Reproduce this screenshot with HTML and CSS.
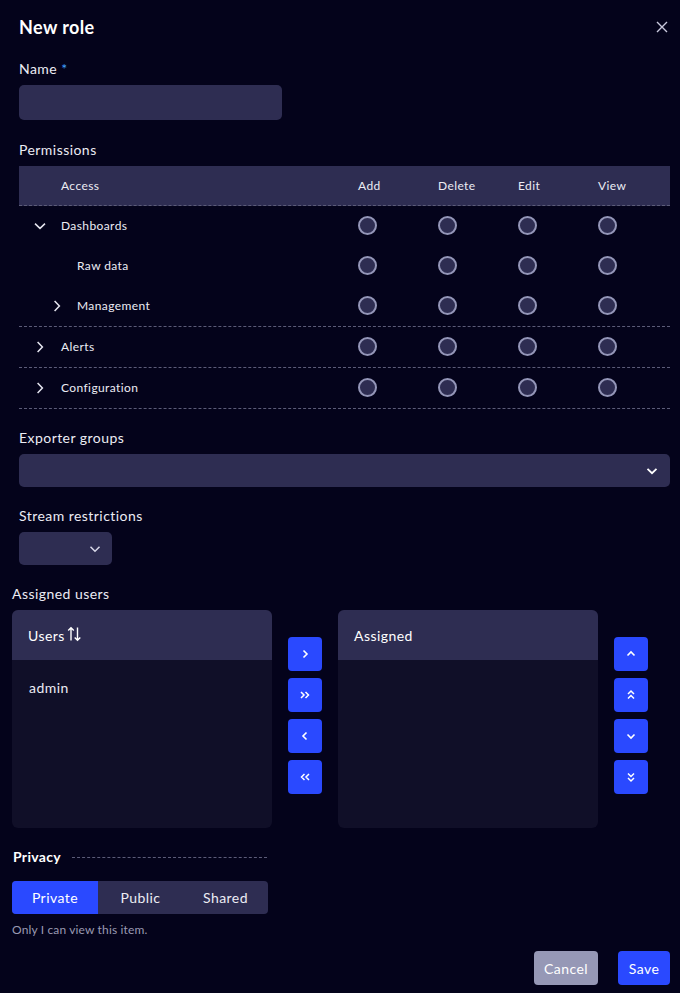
FILE: index.html
```html
<!DOCTYPE html>
<html lang="en">
<head>
<meta charset="utf-8">
<title>New role</title>
<link rel="stylesheet" href="styles.css">
</head>
<body>
<div class="page">
  <div class="form-top">
    <div class="dialog-head">
      <h1 class="title">New role</h1>
      <button class="close" aria-label="Close">
        <svg width="12" height="12" viewBox="0 0 12 12"><path d="M1 1L11 11M11 1L1 11" stroke="#c9c9dd" stroke-width="1.4" fill="none"/></svg>
      </button>
    </div>

    <label class="label">Name <span class="req">*</span></label>
    <div class="input name-input"></div>

    <label class="label mt">Permissions</label>
    <div class="perm-table">
      <div class="prow phead">
        <div class="pcell access">Access</div>
        <div class="pcell">Add</div>
        <div class="pcell">Delete</div>
        <div class="pcell">Edit</div>
        <div class="pcell">View</div>
      </div>
      <div class="pgroup">
        <div class="prow">
          <div class="pcell access"><span class="chev"><svg width="12" height="12" viewBox="0 0 12 12"><path d="M1 3.6L6 8.4L11 3.6" stroke="#e6e6f0" stroke-width="1.5" fill="none"/></svg></span>Dashboards</div>
          <div class="pcell"><span class="radio"></span></div><div class="pcell"><span class="radio"></span></div><div class="pcell"><span class="radio"></span></div><div class="pcell"><span class="radio"></span></div>
        </div>
        <div class="prow">
          <div class="pcell access sub">Raw data</div>
          <div class="pcell"><span class="radio"></span></div><div class="pcell"><span class="radio"></span></div><div class="pcell"><span class="radio"></span></div><div class="pcell"><span class="radio"></span></div>
        </div>
        <div class="prow">
          <div class="pcell access sub"><span class="chev sub-chev"><svg width="12" height="12" viewBox="0 0 12 12"><path d="M3.6 1L8.4 6L3.6 11" stroke="#e6e6f0" stroke-width="1.5" fill="none"/></svg></span>Management</div>
          <div class="pcell"><span class="radio"></span></div><div class="pcell"><span class="radio"></span></div><div class="pcell"><span class="radio"></span></div><div class="pcell"><span class="radio"></span></div>
        </div>
      </div>
      <div class="pgroup">
        <div class="prow">
          <div class="pcell access"><span class="chev"><svg width="12" height="12" viewBox="0 0 12 12"><path d="M3.6 1L8.4 6L3.6 11" stroke="#e6e6f0" stroke-width="1.5" fill="none"/></svg></span>Alerts</div>
          <div class="pcell"><span class="radio"></span></div><div class="pcell"><span class="radio"></span></div><div class="pcell"><span class="radio"></span></div><div class="pcell"><span class="radio"></span></div>
        </div>
      </div>
      <div class="pgroup">
        <div class="prow">
          <div class="pcell access"><span class="chev"><svg width="12" height="12" viewBox="0 0 12 12"><path d="M3.6 1L8.4 6L3.6 11" stroke="#e6e6f0" stroke-width="1.5" fill="none"/></svg></span>Configuration</div>
          <div class="pcell"><span class="radio"></span></div><div class="pcell"><span class="radio"></span></div><div class="pcell"><span class="radio"></span></div><div class="pcell"><span class="radio"></span></div>
        </div>
      </div>
    </div>

    <label class="label mt">Exporter groups</label>
    <div class="input select wide">
      <svg width="12" height="12" viewBox="0 0 12 12"><path d="M1.5 3.8L6 8.2L10.5 3.8" stroke="#ffffff" stroke-width="1.8" fill="none"/></svg>
    </div>

    <label class="label mt">Stream restrictions</label>
    <div class="input select small">
      <svg width="12" height="12" viewBox="0 0 12 12"><path d="M1.5 3.8L6 8.2L10.5 3.8" stroke="#d8d8e8" stroke-width="1.5" fill="none"/></svg>
    </div>
  </div>

  <label class="label mt">Assigned users</label>
  <div class="picklist">
    <div class="list">
      <div class="list-head">Users
        <svg class="sort" width="15" height="16" viewBox="0 0 15 16"><path d="M4 14.5V1.8M1.2 4.6L4 1.8L6.8 4.6" stroke="#ffffff" stroke-width="1.4" fill="none"/><path d="M10.5 1.5V14.2M7.7 11.4L10.5 14.2L13.3 11.4" stroke="#ffffff" stroke-width="1.4" fill="none"/></svg>
      </div>
      <div class="list-body"><div class="item">admin</div></div>
    </div>
    <div class="btn-col">
      <button class="ibtn"><svg width="12" height="12" viewBox="0 0 12 12"><path d="M4.5 2.5L8 6L4.5 9.5" stroke="#fff" stroke-width="1.6" fill="none"/></svg></button>
      <button class="ibtn"><svg width="12" height="12" viewBox="0 0 12 12"><path d="M2 3L5 6L2 9M6.5 3L9.5 6L6.5 9" stroke="#fff" stroke-width="1.5" fill="none"/></svg></button>
      <button class="ibtn"><svg width="12" height="12" viewBox="0 0 12 12"><path d="M7.5 2.5L4 6L7.5 9.5" stroke="#fff" stroke-width="1.6" fill="none"/></svg></button>
      <button class="ibtn"><svg width="12" height="12" viewBox="0 0 12 12"><path d="M5.5 3L2.5 6L5.5 9M10 3L7 6L10 9" stroke="#fff" stroke-width="1.5" fill="none"/></svg></button>
    </div>
    <div class="list">
      <div class="list-head">Assigned</div>
      <div class="list-body"></div>
    </div>
    <div class="btn-col">
      <button class="ibtn"><svg width="12" height="12" viewBox="0 0 12 12"><path d="M2.5 7.5L6 4L9.5 7.5" stroke="#fff" stroke-width="1.6" fill="none"/></svg></button>
      <button class="ibtn"><svg width="12" height="12" viewBox="0 0 12 12"><path d="M3 5L6 2L9 5M3 9.5L6 6.5L9 9.5" stroke="#fff" stroke-width="1.5" fill="none"/></svg></button>
      <button class="ibtn"><svg width="12" height="12" viewBox="0 0 12 12"><path d="M2.5 4.5L6 8L9.5 4.5" stroke="#fff" stroke-width="1.6" fill="none"/></svg></button>
      <button class="ibtn"><svg width="12" height="12" viewBox="0 0 12 12"><path d="M3 2.5L6 5.5L9 2.5M3 7L6 10L9 7" stroke="#fff" stroke-width="1.5" fill="none"/></svg></button>
    </div>
  </div>

  <div class="privacy-head">
    <span class="privacy-title">Privacy</span>
    <span class="privacy-line"></span>
  </div>
  <div class="segmented">
    <button class="seg active">Private</button>
    <button class="seg">Public</button>
    <button class="seg">Shared</button>
  </div>
  <div class="hint">Only I can view this item.</div>

  <div class="actions">
    <button class="btn cancel">Cancel</button>
    <button class="btn save">Save</button>
  </div>
</div>
</body>
</html>
```

FILE: styles.css
```css
* { box-sizing: border-box; }
html, body {
  margin: 0;
  padding: 0;
  background: #04031b;
}
body {
  font-family: Lato, "Noto Sans", sans-serif;
  color: #ececf4;
  font-size: 14px;
  letter-spacing: 0.45px;
}
button {
  font-family: inherit;
  letter-spacing: inherit;
  border: none;
  cursor: pointer;
}
.page {
  width: 680px;
  height: 993px;
  padding: 0 10px 0 12px;
  display: flex;
  flex-direction: column;
}
.form-top {
  padding-left: 7px;
  display: flex;
  flex-direction: column;
}
.dialog-head {
  display: flex;
  justify-content: space-between;
  align-items: center;
  padding-top: 15px;
  height: 39px;
}
.title {
  margin: 0;
  font-size: 18px;
  font-weight: 700;
  line-height: 24px;
  letter-spacing: 0.4px;
  color: #ffffff;
}
.close {
  background: none;
  padding: 0;
  width: 12px;
  height: 12px;
  margin-right: 2px;
  display: flex;
}
.label {
  display: block;
  line-height: 20px;
  font-size: 14px;
  color: #ececf4;
  margin-top: 20px;
  margin-bottom: 6px;
}
.label.mt { margin-top: 19px; }
.req { color: #3fa0ff; }
.input {
  background: #2e2d52;
  border-radius: 5px;
}
.name-input {
  width: 263px;
  height: 35px;
}
.label.mt:nth-of-type(2) { margin-top: 20px; }

.perm-table {
  width: 651px;
  font-size: 12px;
  letter-spacing: 0.4px;
}
.prow {
  display: flex;
  height: 40px;
  align-items: center;
}
.pgroup .prow { height: 40px; padding-bottom: 1px; }
.phead {
  background: #2e2d52;
  height: 40px;
  border-bottom: 1px dashed #5c5c78;
}
.pgroup {
  border-bottom: 1px dashed #5c5c78;
}
.pcell {
  width: 80px;
  padding-left: 8px;
  display: flex;
  align-items: center;
}
.pcell.access {
  width: 331px;
  padding-left: 42px;
  position: relative;
}
.pcell.sub { padding-left: 58px; }
.chev {
  position: absolute;
  left: 15px;
  top: 50%;
  margin-top: -6px;
  width: 12px;
  height: 12px;
  display: flex;
}
.chev.sub-chev { left: 32px; }
.radio {
  width: 19px;
  height: 19px;
  border-radius: 50%;
  background: #2e2d52;
  border: 2px solid #9496b8;
  display: block;
}

.select {
  height: 33px;
  display: flex;
  align-items: center;
  justify-content: flex-end;
}
.select.wide {
  width: 651px;
  padding-right: 12px;
}
.select.small {
  width: 93px;
  padding-right: 11px;
}

.picklist {
  display: flex;
  align-items: flex-start;
  gap: 16px;
}
.list {
  width: 260px;
  height: 218px;
  border-radius: 6px;
  overflow: hidden;
  background: #100f28;
  display: flex;
  flex-direction: column;
}
.list-head {
  height: 50px;
  background: #2e2d52;
  display: flex;
  align-items: center;
  padding-left: 16px;
  font-size: 14px;
  color: #ffffff;
  gap: 2px;
}
.sort { margin-top: -2px; }
.list-body {
  flex: 1;
  padding: 18px 17px;
}
.item {
  font-size: 14px;
  line-height: 20px;
  color: #ececf4;
}
.btn-col {
  display: flex;
  flex-direction: column;
  gap: 7px;
  padding-top: 27px;
}
.ibtn {
  width: 34px;
  height: 34px;
  border-radius: 4px;
  background: #2a49ff;
  display: flex;
  align-items: center;
  justify-content: center;
  padding: 0;
}

.privacy-head {
  margin-top: 19px;
  display: flex;
  align-items: center;
  gap: 11px;
  width: 255px;
  padding-left: 1px;
}
.privacy-title {
  font-weight: 700;
  font-size: 14px;
  line-height: 20px;
  letter-spacing: 0.3px;
  color: #ffffff;
}
.privacy-line {
  flex: 1;
  border-top: 1px dashed #5c5c78;
}
.segmented {
  margin-top: 14px;
  width: 256px;
  height: 33px;
  background: #2e2d52;
  border-radius: 4px;
  display: grid;
  grid-template-columns: 86px 85px 85px;
  overflow: hidden;
}
.seg {
  background: transparent;
  color: #ececf4;
  font-size: 14px;
  padding: 0;
}
.seg.active { background: #2a49ff; color: #ffffff; }
.hint {
  margin-top: 9px;
  font-size: 12px;
  line-height: 14px;
  letter-spacing: 0.15px;
  color: #9a9ab2;
}
.actions {
  margin-top: 14px;
  display: flex;
  justify-content: flex-end;
  gap: 20px;
}
.btn {
  height: 34px;
  border-radius: 4px;
  font-size: 14px;
  color: #ffffff;
  padding: 0;
}
.cancel { width: 64px; background: #9698b6; }
.save { width: 52px; background: #2a49ff; }
```
